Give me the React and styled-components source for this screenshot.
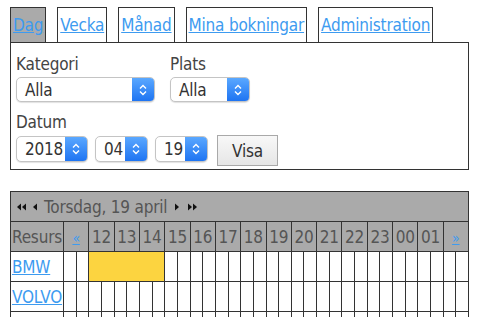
import React from 'react';
import styled, { createGlobalStyle } from 'styled-components';

const GlobalStyle = createGlobalStyle`
  body {
    margin: 0;
    background: #fff;
    color: #444;
    font-family: "DejaVu Sans Condensed", "DejaVu Sans", sans-serif;
    font-stretch: condensed;
    font-size: 17px;
    letter-spacing: -0.2px;
  }
`;

const Page = styled.div`
  width: 459px;
  padding: 7px 13px 0 10px;
`;

const Tabs = styled.div`
  display: flex;
  gap: 11px;
  align-items: flex-end;
`;

const Tab = styled.div`
  border: 1px solid #333;
  border-bottom: none;
  background: ${(p) => (p.$active ? '#aaa' : '#fff')};
  padding: 0 2px;
  line-height: 34px;
  white-space: nowrap;
`;

const Link = styled.a`
  color: #3d9bf0;
  text-decoration: underline;
  cursor: pointer;
`;

const Panel = styled.div`
  border: 1px solid #333;
  padding: 9px 5px 3px 5px;
`;

const FilterRow = styled.div`
  display: flex;
  gap: 15px;
`;

const Field = styled.div`
  display: flex;
  flex-direction: column;
`;

const Label = styled.div`
  line-height: 24px;
  margin-bottom: 1px;
  color: #444;
`;

const DateLabel = styled(Label)`
  margin-top: 8px;
`;

const Controls = styled.div`
  display: flex;
  align-items: flex-start;
  gap: 7px;
`;

const SelectBox = styled.div`
  display: flex;
  width: ${(p) => p.$width}px;
  height: ${(p) => p.$height || 25}px;
  margin-top: ${(p) => p.$top || 0}px;
  box-sizing: border-box;
  border: 1px solid #c4c4c4;
  border-radius: 5px;
  background: #fff;
  box-shadow: 0 1px 1px rgba(0, 0, 0, 0.12);
  overflow: hidden;
`;

const SelectValue = styled.span`
  flex: 1;
  padding-left: 8px;
  display: flex;
  align-items: center;
  color: #333;
`;

const ArrowBox = styled.span`
  width: 22px;
  display: flex;
  align-items: center;
  justify-content: center;
  background: linear-gradient(#5aa8ff, #1e74f2);
`;

const Button = styled.button`
  width: 61px;
  height: 31px;
  margin-left: 2px;
  border: 1px solid #a9a9a9;
  background: linear-gradient(#f8f8f8, #e6e6e6);
  font-family: inherit;
  font-size: 17px;
  letter-spacing: -0.2px;
  color: #333;
  padding: 0;
`;

const Grid = styled.table`
  margin-top: 21px;
  width: 459px;
  border-collapse: collapse;
  table-layout: fixed;
  border: 1px solid #333;
`;

const Cell = styled.td`
  border: 1px solid #333;
  height: 30px;
  padding: 0 1px;
  box-sizing: border-box;
  background: ${(p) => (p.$booked ? '#fcd440' : '#fff')};
  white-space: nowrap;
`;

const Head = styled.th`
  border: 1px solid #333;
  background: #aaa;
  color: #555;
  font-weight: normal;
  height: 30px;
  padding: 0 1px;
  box-sizing: border-box;
  text-align: ${(p) => (p.$left ? 'left' : 'center')};
  white-space: nowrap;
`;

const DayBar = styled.div`
  display: flex;
  align-items: center;
  padding-left: 3px;
  color: #555;
`;

const Nav = styled.span`
  display: inline-flex;
  margin: ${(p) => p.$m};
`;

const Small = styled(Link)`
  font-size: 14px;
`;

const Chevrons = () => (
  <svg width="10" height="16" viewBox="0 0 10 16">
    <path d="M2 6.5 L5 3.5 L8 6.5 M2 9.5 L5 12.5 L8 9.5" fill="none" stroke="#fff" strokeWidth="1.4" />
  </svg>
);

const Tri = ({ dir, count }) => (
  <svg width={count * 5} height="8" viewBox={`0 0 ${count * 5} 8`}>
    {Array.from({ length: count }).map((_, i) =>
      dir === 'left' ? (
        <polygon key={i} points={`${i * 5 + 4},0.5 ${i * 5 + 4},7.5 ${i * 5},4`} fill="#111" />
      ) : (
        <polygon key={i} points={`${i * 5},0.5 ${i * 5},7.5 ${i * 5 + 4},4`} fill="#111" />
      )
    )}
  </svg>
);

const Select = ({ value, width, height, top }) => (
  <SelectBox $width={width} $height={height} $top={top}>
    <SelectValue>{value}</SelectValue>
    <ArrowBox>
      <Chevrons />
    </ArrowBox>
  </SelectBox>
);

const hours = ['12', '13', '14', '15', '16', '17', '18', '19', '20', '21', '22', '23', '00', '01'];
const halves = 32;

const Row = ({ name, booked }) => {
  const cells = [];
  let i = 0;
  while (i < halves) {
    if (booked && i === booked[0]) {
      cells.push(<Cell key={i} colSpan={booked[1]} $booked />);
      i += booked[1];
    } else {
      cells.push(<Cell key={i} />);
      i += 1;
    }
  }
  return (
    <tr>
      <Cell>{name && <Link>{name}</Link>}</Cell>
      {cells}
    </tr>
  );
};

export default function App() {
  return (
    <>
      <GlobalStyle />
      <Page>
        <Tabs>
          <Tab $active><Link>Dag</Link></Tab>
          <Tab><Link>Vecka</Link></Tab>
          <Tab><Link>Månad</Link></Tab>
          <Tab><Link>Mina bokningar</Link></Tab>
          <Tab><Link>Administration</Link></Tab>
        </Tabs>
        <Panel>
          <FilterRow>
            <Field>
              <Label>Kategori</Label>
              <Select value="Alla" width={139} />
            </Field>
            <Field>
              <Label>Plats</Label>
              <Select value="Alla" width={80} />
            </Field>
          </FilterRow>
          <DateLabel>Datum</DateLabel>
          <Controls>
            <Select value="2018" width={72} height={26} top={1} />
            <Select value="04" width={53} height={26} top={1} />
            <Select value="19" width={53} height={26} top={1} />
            <Button>Visa</Button>
          </Controls>
        </Panel>
        <Grid>
          <colgroup>
            <col style={{ width: 53 }} />
            {Array.from({ length: halves }).map((_, i) => (
              <col key={i} />
            ))}
          </colgroup>
          <thead>
            <tr>
              <Head colSpan={33} $left>
                <DayBar>
                  <Nav $m="0 6px 0 2px"><Tri dir="left" count={2} /></Nav>
                  <Nav $m="0 6px 0 0"><Tri dir="left" count={1} /></Nav>
                  Torsdag, 19 april
                  <Nav $m="0 0 0 8px"><Tri dir="right" count={1} /></Nav>
                  <Nav $m="0 0 0 8px"><Tri dir="right" count={2} /></Nav>
                </DayBar>
              </Head>
            </tr>
            <tr>
              <Head $left>Resurs</Head>
              <Head colSpan={2}><Small>«</Small></Head>
              {hours.map((h) => (
                <Head key={h} colSpan={2}>{h}</Head>
              ))}
              <Head colSpan={2}><Small>»</Small></Head>
            </tr>
          </thead>
          <tbody>
            <Row name="BMW" booked={[2, 6]} />
            <Row name="VOLVO" />
            <Row />
          </tbody>
        </Grid>
      </Page>
    </>
  );
}
